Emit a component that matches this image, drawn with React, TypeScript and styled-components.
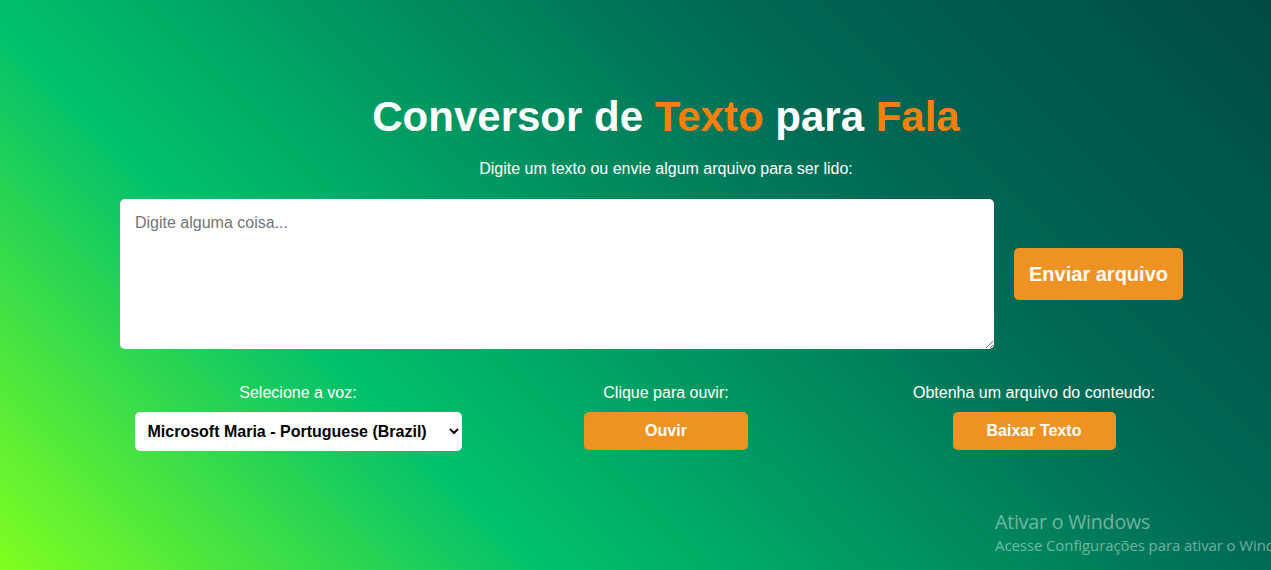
import React from "react";
import styled, { createGlobalStyle } from "styled-components";

const GlobalStyle = createGlobalStyle`
  html, body {
    margin: 0;
    padding: 0;
    height: 100%;
    overflow: hidden;
  }
  body {
    font-family: "Liberation Sans", Arial, sans-serif;
    background: linear-gradient(45deg, #80ff20 0%, #00c06c 30%, #006a55 69%, #004b43 100%);
    background-attachment: fixed;
    min-height: 570px;
  }
`;

const Page = styled.main`
  position: relative;
  width: 100%;
  height: 570px;
  color: #ffffff;
  overflow: hidden;
`;

const Container = styled.div`
  width: 1104px;
  margin-left: 114px;
  padding-top: 93px;
  display: flex;
  flex-direction: column;
`;

const Title = styled.h1`
  margin: 0;
  font-size: 42px;
  line-height: 48px;
  font-weight: 700;
  text-align: center;
  color: #ffffff;
`;

const Accent = styled.span`
  color: #fb7f0c;
`;

const Subtitle = styled.p`
  margin: 19px 0 0;
  font-size: 16px;
  line-height: 18px;
  text-align: center;
`;

const InputRow = styled.div`
  margin-top: 21px;
  padding-left: 6px;
  display: flex;
  align-items: center;
  gap: 20px;
`;

const TextArea = styled.textarea`
  box-sizing: border-box;
  width: 874px;
  height: 150px;
  border: none;
  border-radius: 5px;
  padding: 15px 15px;
  font-family: "Liberation Sans", Arial, sans-serif;
  font-size: 16px;
  line-height: 18px;
  color: #222;
  background: #ffffff;
  outline: none;
  &::placeholder {
    color: #757575;
  }
`;

const OrangeButton = styled.button<{ $w: number; $h: number; $size: number }>`
  box-sizing: border-box;
  width: ${(p) => p.$w}px;
  height: ${(p) => p.$h}px;
  border: none;
  border-radius: 5px;
  background: #ee9224;
  color: #ffffff;
  font-family: "Liberation Sans", Arial, sans-serif;
  font-weight: 700;
  font-size: ${(p) => p.$size}px;
  cursor: pointer;
  padding: 0;
`;

const Controls = styled.div`
  margin-top: 35px;
  display: grid;
  grid-template-columns: repeat(3, 368px);
`;

const Control = styled.div`
  display: flex;
  flex-direction: column;
  align-items: center;
  gap: 10px;
`;

const Label = styled.span`
  font-size: 16px;
  line-height: 18px;
  color: #ffffff;
`;

const Select = styled.select`
  box-sizing: border-box;
  width: 327px;
  height: 39px;
  border: none;
  border-radius: 5px;
  background: #ffffff;
  color: #000000;
  padding: 0 6px 0 9px;
  font-family: "Liberation Sans", Arial, sans-serif;
  font-weight: 700;
  font-size: 16px;
  outline: none;
`;

const Watermark = styled.div`
  position: absolute;
  left: 995px;
  top: 509px;
  white-space: nowrap;
  font-family: "Open Sans", "Noto Sans", sans-serif;
  color: rgba(255, 255, 255, 0.45);
  display: flex;
  flex-direction: column;
`;

const WatermarkTitle = styled.span`
  font-size: 19.6px;
  line-height: 26px;
  letter-spacing: -0.2px;
`;

const WatermarkText = styled.span`
  font-size: 15px;
  line-height: 21px;
  letter-spacing: -0.1px;
`;

export default function App() {
  return (
    <>
      <GlobalStyle />
      <Page>
        <Container>
          <Title>
            Conversor de <Accent>Texto</Accent> para <Accent>Fala</Accent>
          </Title>
          <Subtitle>Digite um texto ou envie algum arquivo para ser lido:</Subtitle>
          <InputRow>
            <TextArea placeholder="Digite alguma coisa..." />
            <OrangeButton $w={169} $h={52} $size={20}>
              Enviar arquivo
            </OrangeButton>
          </InputRow>
          <Controls>
            <Control>
              <Label>Selecione a voz:</Label>
              <Select defaultValue="maria">
                <option value="maria">Microsoft Maria - Portuguese (Brazil)</option>
              </Select>
            </Control>
            <Control>
              <Label>Clique para ouvir:</Label>
              <OrangeButton $w={164} $h={38} $size={16}>
                Ouvir
              </OrangeButton>
            </Control>
            <Control>
              <Label>Obtenha um arquivo do conteudo:</Label>
              <OrangeButton $w={163} $h={38} $size={16}>
                Baixar Texto
              </OrangeButton>
            </Control>
          </Controls>
        </Container>
        <Watermark>
          <WatermarkTitle>Ativar o Windows</WatermarkTitle>
          <WatermarkText>Acesse Configurações para ativar o Windows.</WatermarkText>
        </Watermark>
      </Page>
    </>
  );
}
